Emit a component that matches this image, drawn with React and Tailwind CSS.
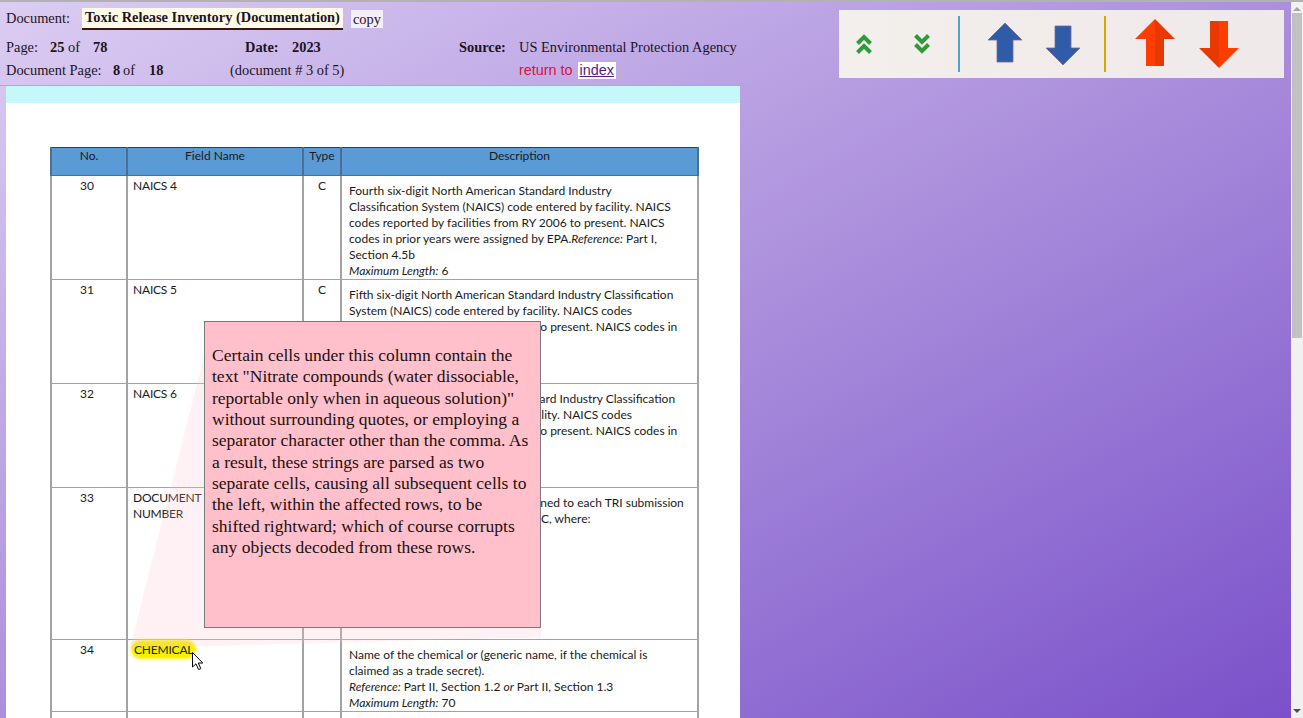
import React from 'react'

const rows = [
  {
    no: '30',
    name: 'NAICS 4',
    type: 'C',
    h: 'h-[104px]',
    desc: (
      <>
        Fourth six-digit North American Standard Industry
        <br />
        Classification System (NAICS) code entered by facility. NAICS
        <br />
        codes reported by facilities from RY 2006 to present. NAICS
        <br />
        codes in prior years were assigned by EPA.<i>Reference:</i> Part I,
        <br />
        Section 4.5b
        <br />
        <i>Maximum Length:</i> 6
      </>
    ),
  },
  {
    no: '31',
    name: 'NAICS 5',
    type: 'C',
    h: 'h-[104px]',
    desc: (
      <>
        Fifth six-digit North American Standard Industry Classification
        <br />
        System (NAICS) code entered by facility. NAICS codes
        <br />
        reported by facilities from RY 2006 to present. NAICS codes in
        <br />
        prior years were assigned by EPA.
        <br />
        <i>Reference:</i> Part I, Section 4.5b
        <br />
        <i>Maximum Length:</i> 6
      </>
    ),
  },
  {
    no: '32',
    name: 'NAICS 6',
    type: 'C',
    h: 'h-[104px]',
    desc: (
      <>
        Sixth six-digit North American Standard Industry Classification
        <br />
        System (NAICS) code entered by facility. NAICS codes
        <br />
        reported by facilities from RY 2006 to present. NAICS codes in
        <br />
        prior years were assigned by EPA.
        <br />
        <i>Reference:</i> Part I, Section 4.5b
        <br />
        <i>Maximum Length:</i> 6
      </>
    ),
  },
  {
    no: '33',
    name: (
      <>
        DOCUMENT CONTROL
        <br />
        NUMBER
      </>
    ),
    type: 'C',
    h: 'h-[152px]',
    desc: (
      <>
        A unique identification number assigned to each TRI submission
        <br />
        <span className="inline-block w-[192px] overflow-hidden align-top">form. The format is YYNNNNNNNNNN</span>
        C, where:
        <br />
        YY = reporting year
        <br />
        N = sequence number
        <br />
        C = check digit
        <br />
        <br />
        <i>Reference:</i> none
        <br />
        <i>Maximum Length:</i> 13
      </>
    ),
  },
  {
    no: '34',
    name: (
      <span className="rounded-[7px] bg-[#f5f000] px-[1px] shadow-[0_0_3px_2px_#f5f000]">CHEMICAL</span>
    ),
    type: '',
    h: 'h-[72px]',
    desc: (
      <>
        Name of the chemical or (generic name, if the chemical is
        <br />
        claimed as a trade secret).
        <br />
        <i>Reference:</i> Part II, Section 1.2 <i>or</i> Part II, Section 1.3
        <br />
        <i>Maximum Length:</i> 70
      </>
    ),
  },
  {
    no: '35',
    name: 'ELEMENTAL METAL INCLUDED',
    type: 'N',
    h: 'h-[72px]',
    desc: <>Indicates whether the reporting is for the elemental metal.</>,
  },
]

function Chevrons({ down }) {
  return (
    <svg width="16" height="22" viewBox="0 0 16 22" className={down ? 'rotate-180' : ''}>
      <path d="M1.5 10.5 L8 4 L14.5 10.5" fill="none" stroke="#2f9b3b" strokeWidth="4" />
      <path d="M1.5 19.5 L8 13 L14.5 19.5" fill="none" stroke="#2f9b3b" strokeWidth="4" />
    </svg>
  )
}

function BlueArrow({ down }) {
  return (
    <svg width="36" height="41" viewBox="0 0 36 41" className={down ? 'rotate-180' : ''}>
      <polygon
        points="18,1 35,18 26,18 26,40 10,40 10,18 1,18"
        fill="#2f5ba8"
        stroke="#7a6a90"
        strokeWidth="0.8"
      />
    </svg>
  )
}

function RedArrow({ down }) {
  return (
    <svg width="40" height="47" viewBox="0 0 40 47" className={down ? 'rotate-180' : ''}>
      <polygon points="20,0 0,20 11,20 11,47 20,47" fill="#ff3d00" />
      <polygon points="20,0 40,20 29,20 29,47 20,47" fill="#e83a00" />
    </svg>
  )
}

function Toolbar() {
  return (
    <div className="ml-[51px] mt-[8px] flex h-[68px] w-[445px] items-center bg-gradient-to-r from-[#f3efeb] to-[#efe9ea] pl-[17px]">
      <Chevrons />
      <div className="ml-[42px]">
        <Chevrons down />
      </div>
      <div className="ml-[28px] h-[56px] w-[2px] bg-[#4ea4c8]" />
      <div className="ml-[27px] -mt-[4px]">
        <BlueArrow />
      </div>
      <div className="ml-[22px] mt-[2px]">
        <BlueArrow down />
      </div>
      <div className="ml-[23px] h-[56px] w-[2px] bg-[#d4a800]" />
      <div className="ml-[29px] -mt-[4px]">
        <RedArrow />
      </div>
      <div className="ml-[24px] mt-[1px]">
        <RedArrow down />
      </div>
    </div>
  )
}

function Header() {
  return (
    <div className="h-[84px] w-[788px] border-b border-[#b9a2dc] pl-[6px] font-['Liberation_Serif',serif] text-[14.4px] text-[#1c1424]">
      <div className="mt-[6px] flex h-[22px] items-center">
        <span className="w-[76px]">Document:</span>
        <span className="flex h-[22px] items-center border-b-2 border-[#3c1414] bg-[#fffbe8] px-[3px] font-bold">
          Toxic Release Inventory (Documentation)
        </span>
        <span className="ml-[8px] bg-[#f4eef8] px-[2px] leading-[18px]">copy</span>
      </div>
      <div className="mt-[6px] flex h-[23px] items-center">
        <div className="flex w-[239px]">
          <span className="w-[44px]">Page:</span>
          <b className="w-[18px]">25</b>
          <span className="w-[25px]">of</span>
          <b>78</b>
        </div>
        <div className="flex w-[214px]">
          <b className="w-[47px]">Date:</b>
          <b>2023</b>
        </div>
        <b className="w-[60px]">Source:</b>
        <span>US Environmental Protection Agency</span>
      </div>
      <div className="flex h-[23px] items-center">
        <div className="flex w-[224px]">
          <span className="w-[107px]">Document Page:</span>
          <b className="w-[10px]">8</b>
          <span className="w-[26px]">of</span>
          <b>18</b>
        </div>
        <div className="w-[289px]">(document # 3 of 5)</div>
        <span className="font-['Liberation_Sans',sans-serif] text-[#d8143c]">return to</span>
        <span className="ml-[5px] bg-white px-[2px] font-['Liberation_Sans',sans-serif] leading-[17px] text-[#5a1a8c] underline">
          index
        </span>
      </div>
    </div>
  )
}

function DocTable() {
  return (
    <table className="w-[647px] table-fixed border-collapse border border-[#3c3c3c] font-['Lato',sans-serif] text-[12px] leading-[16px] text-[#1a1a1a]">
      <colgroup>
        <col className="w-[76px]" />
        <col className="w-[176px]" />
        <col className="w-[38px]" />
        <col className="w-[357px]" />
      </colgroup>
      <thead>
        <tr className="h-[28px] bg-[#5b9bd5]">
          {['No.', 'Field Name', 'Type', 'Description'].map((t) => (
            <th key={t} className="border-x-2 border-b border-[#4a6f94] pb-[8px] text-center align-top font-normal">
              {t}
            </th>
          ))}
        </tr>
      </thead>
      <tbody>
        {rows.map((r) => (
          <tr key={r.no} className={r.h}>
            <td className="border-x-2 border-b border-[#a3a3a3] pr-[4px] pt-[2px] text-center align-top">{r.no}</td>
            <td className="border-x-2 border-b border-[#a3a3a3] pl-[5px] pt-[2px] align-top tracking-[-0.2px]">{r.name}</td>
            <td className="border-x-2 border-b border-[#a3a3a3] pt-[2px] text-center align-top">{r.type}</td>
            <td className="whitespace-nowrap border-x-2 border-b border-[#a3a3a3] pl-[7px] pt-[7px] align-top">
              {r.desc}
            </td>
          </tr>
        ))}
      </tbody>
    </table>
  )
}

function Page() {
  return (
    <div className="relative ml-[6px] min-h-0 w-[734px] flex-1 overflow-hidden bg-white">
      <div className="h-[17px] bg-[#c5f8f8]" />
      <div className="pl-[44px] pt-[44px]">
        <DocTable />
      </div>

      <svg className="pointer-events-none absolute left-0 top-0" width="734" height="640">
        <polygon points="124,562 198,270 198,541 535,541 535,551" fill="#ffc0cb" opacity="0.22" />
      </svg>

      <div className="absolute left-[198px] top-[235px] h-[307px] w-[337px] border border-[#7a7a7a] bg-[#ffc0cb] px-[7px] pt-[23px] font-['Liberation_Serif',serif] text-[17.5px] leading-[21.35px] text-[#1a1010]">
        Certain cells under this column contain the text "Nitrate compounds (water dissociable, reportable only when in
        aqueous solution)" without surrounding quotes, or employing a separator character other than the comma. As a
        result, these strings are parsed as two separate cells, causing all subsequent cells to the left, within the
        affected rows, to be shifted rightward; which of course corrupts any objects decoded from these rows.
      </div>

      <svg className="absolute left-[186px] top-[566px]" width="12" height="19" viewBox="0 0 12 19">
        <path d="M0.5 0.5 L0.5 15 L4 11.8 L6.6 17.6 L8.8 16.6 L6.3 11 L10.8 11 Z" fill="#fff" stroke="#000" strokeWidth="1" />
      </svg>
    </div>
  )
}

function Scrollbar() {
  return (
    <div className="flex w-[12px] flex-col items-center bg-[#f1f1f1]">
      <div className="mt-[5px] h-0 w-0 border-x-[4px] border-b-[4px] border-x-transparent border-b-[#a3a3a3]" />
      <div className="mt-[2px] h-[325px] w-[10px] bg-[#c1c1c1]" />
      <div className="mt-auto mb-[5px] h-0 w-0 border-x-[4px] border-t-[4px] border-x-transparent border-t-[#505050]" />
    </div>
  )
}

export default function App() {
  return (
    <div className="flex h-[718px] w-[1303px] flex-col overflow-hidden">
      <div className="h-[2px] bg-[#b2b2b2]" />
      <div className="flex min-h-0 flex-1">
        <div className="flex min-h-0 flex-1 bg-gradient-to-br from-[#dccdf2] via-[#ab8fdc] to-[#7b50c9]">
          <div className="flex w-[788px] flex-col">
            <Header />
            <Page />
          </div>
          <div>
            <Toolbar />
          </div>
        </div>
        <Scrollbar />
      </div>
    </div>
  )
}
